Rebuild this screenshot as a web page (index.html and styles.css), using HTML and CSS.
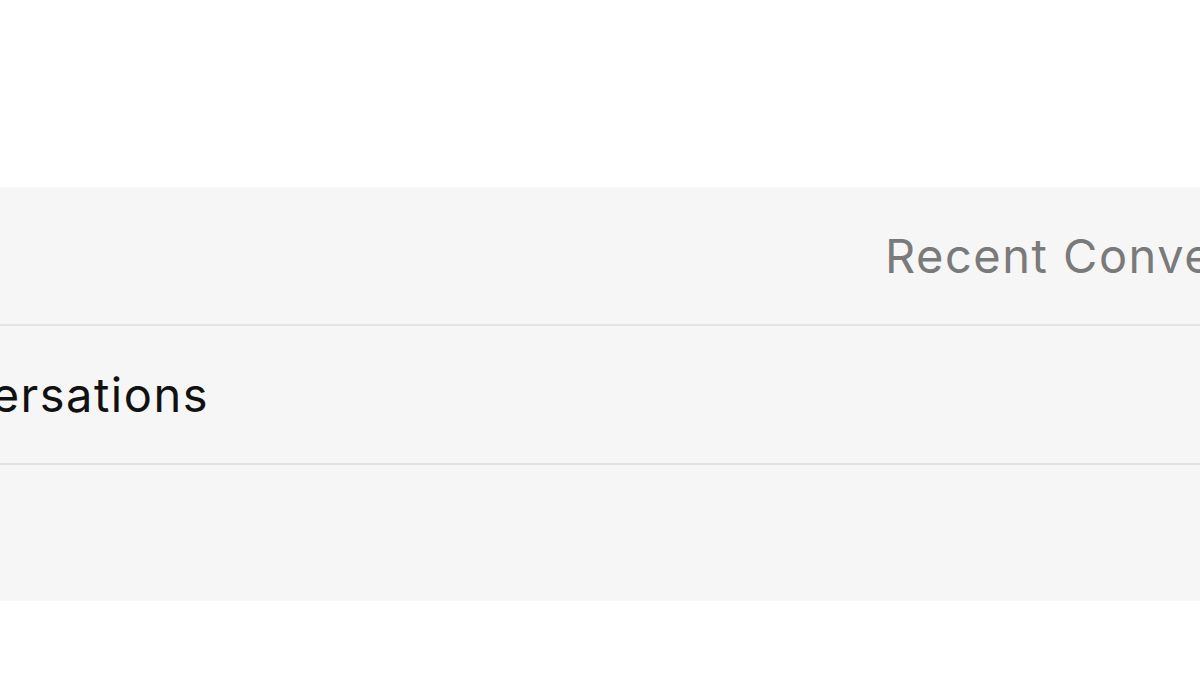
FILE: index.html
```html
<!DOCTYPE html>
<html lang="en">
<head>
    <meta charset="UTF-8">
    <meta name="viewport" content="width=device-width, initial-scale=1.0">
    <title>Recent Conversations</title>
    <link rel="stylesheet" href="styles.css">
</head>
<body>
    <div class="page-top"></div>

    <div class="nav-band">
        <div class="nav-row nav-row-back">
            <span class="nav-back-title">Recent Conversations</span>
        </div>

        <div class="nav-row nav-row-title">
            <div class="nav-title-track">
                <span class="nav-title">Recent Conversations</span>
            </div>
        </div>

        <div class="nav-row nav-row-empty"></div>
    </div>
</body>
</html>
```

FILE: styles.css
```css
:root {
    --color-band: #f6f6f6;
    --color-line: #e2e2e2;
    --color-text: #111111;
    --color-muted: #7a7a7a;
}

* {
    margin: 0;
    padding: 0;
    box-sizing: border-box;
}

html,
body {
    width: 100%;
    height: 100%;
    overflow: hidden;
}

body {
    font-family: Inter, "Noto Sans", "Liberation Sans", sans-serif;
    background: #ffffff;
    color: var(--color-text);
}

.page-top {
    height: 187px;
}

.nav-band {
    background: var(--color-band);
    display: flex;
    flex-direction: column;
}

.nav-row {
    height: 139px;
    display: flex;
    align-items: center;
    overflow: hidden;
    white-space: nowrap;
    font-size: 47px;
    letter-spacing: 1.5px;
    border-bottom: 2px solid var(--color-line);
}

.nav-row-empty {
    height: 136px;
    border-bottom: none;
}

/* back label, partly off the right edge */
.nav-row-back {
    padding-left: 885px;
    color: var(--color-muted);
}

/* large title, partly off the left edge */
.nav-title-track {
    width: 209px;
    display: flex;
    justify-content: flex-end;
}

.nav-title {
    flex-shrink: 0;
    color: var(--color-text);
}
```
